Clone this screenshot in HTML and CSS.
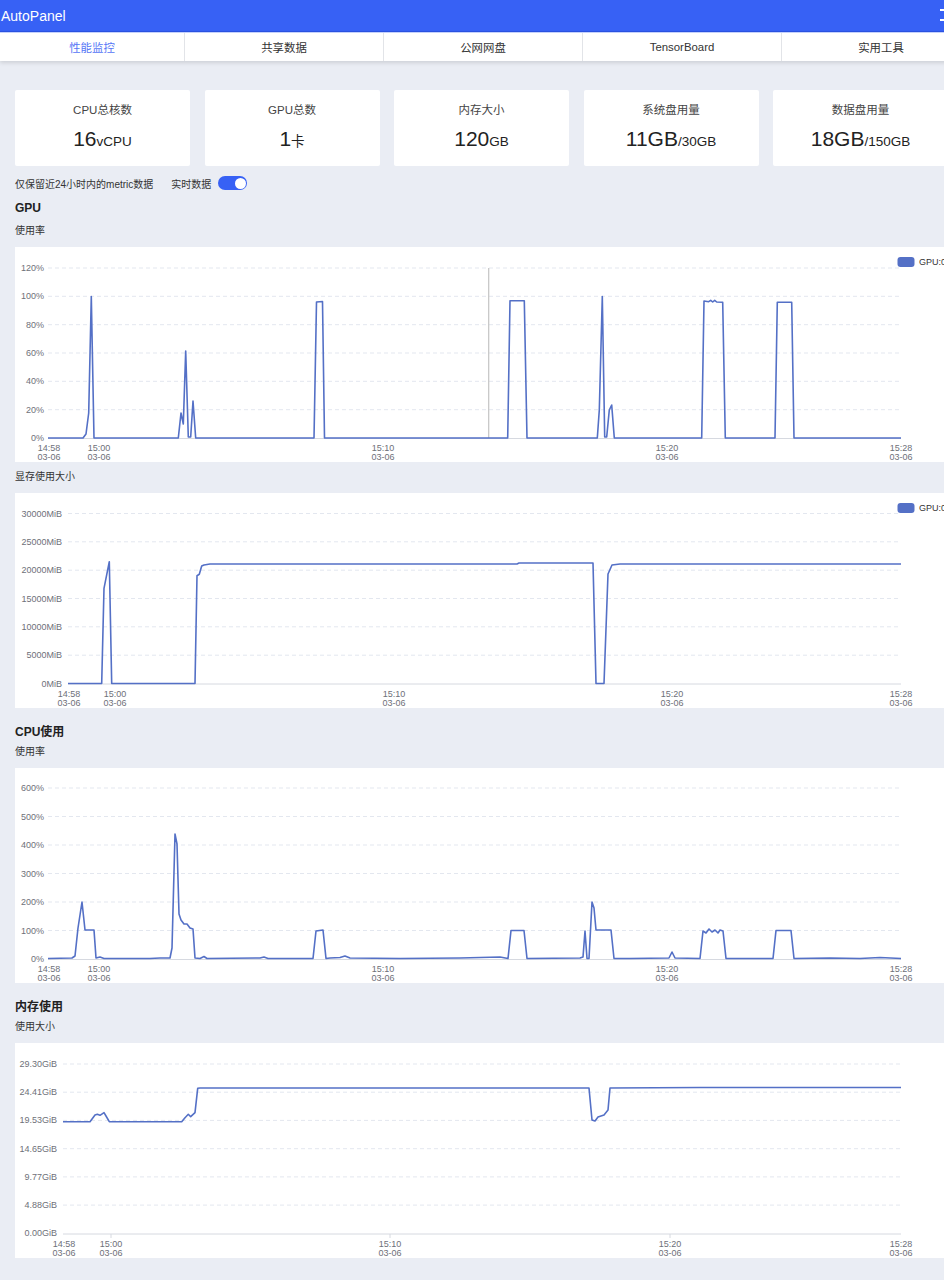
FILE: index.html
```html
<!DOCTYPE html>
<html lang="zh-CN">
<head>
    <meta charset="UTF-8">
    <meta name="viewport" content="width=device-width, initial-scale=1.0">
    <title>AutoPanel - 性能监控</title>
    <link rel="stylesheet" href="styles.css">
</head>
<body>
<div class="app">
    <!-- Top bar -->
    <header class="topbar">
        <span class="brand">AutoPanel</span>
        <span class="menu-icon"><i></i><i></i></span>
    </header>

    <nav class="tabs">
        <a class="tab active">性能监控</a>
        <a class="tab">共享数据</a>
        <a class="tab">公网网盘</a>
        <a class="tab">TensorBoard</a>
        <a class="tab">实用工具</a>
    </nav>

    <main class="content">
        <!-- Summary cards -->
        <div class="stats">
            <div class="stat-card">
                <div class="stat-title">CPU总核数</div>
                <div class="stat-value">16<span class="unit">vCPU</span></div>
            </div>
            <div class="stat-card">
                <div class="stat-title">GPU总数</div>
                <div class="stat-value">1<span class="unit">卡</span></div>
            </div>
            <div class="stat-card">
                <div class="stat-title">内存大小</div>
                <div class="stat-value">120<span class="unit">GB</span></div>
            </div>
            <div class="stat-card">
                <div class="stat-title">系统盘用量</div>
                <div class="stat-value">11GB<span class="unit">/30GB</span></div>
            </div>
            <div class="stat-card">
                <div class="stat-title">数据盘用量</div>
                <div class="stat-value">18GB<span class="unit">/150GB</span></div>
            </div>
        </div>

        <div class="toggle-row">
            <span>仅保留近24小时内的metric数据</span>
            <span class="toggle-label">实时数据</span>
            <span class="switch on"><span class="knob"></span></span>
        </div>

        <!-- GPU -->
        <h2 class="group-title first">GPU</h2>
        <div class="chart-label">使用率</div>
        <div class="chart-card">
            <svg class="chart" width="960" height="215" viewBox="0 0 960 215">
                <g class="grid">
                    <line x1="33" y1="21" x2="886" y2="21"/>
                    <line x1="33" y1="49.3" x2="886" y2="49.3"/>
                    <line x1="33" y1="77.7" x2="886" y2="77.7"/>
                    <line x1="33" y1="106" x2="886" y2="106"/>
                    <line x1="33" y1="134.3" x2="886" y2="134.3"/>
                    <line x1="33" y1="162.7" x2="886" y2="162.7"/>
                </g>
                <line class="axis" x1="33" y1="191.5" x2="886" y2="191.5"/>
                <g class="y-labels">
                    <text x="29" y="21">120%</text>
                    <text x="29" y="49.3">100%</text>
                    <text x="29" y="77.7">80%</text>
                    <text x="29" y="106">60%</text>
                    <text x="29" y="134.3">40%</text>
                    <text x="29" y="162.7">20%</text>
                    <text x="29" y="191">0%</text>
                </g>
                <g class="x-labels">
                    <text x="34" y="204">14:58<tspan x="34" y="213">03-06</tspan></text>
                    <text x="84" y="204">15:00<tspan x="84" y="213">03-06</tspan></text>
                    <text x="368" y="204">15:10<tspan x="368" y="213">03-06</tspan></text>
                    <text x="652" y="204">15:20<tspan x="652" y="213">03-06</tspan></text>
                    <text x="886" y="204">15:28<tspan x="886" y="213">03-06</tspan></text>
                </g>
                <line class="pointer" x1="473.7" y1="21" x2="473.7" y2="191"/>
                <polyline class="series" points="33,191 68,191 71,187 73.7,166 76.3,49.5 79,191 163.3,191 166,166 168.3,177 170.7,104 173.3,190 175.7,190 178,154 180.7,191 299,191 301.5,55 307.5,54.5 309.5,191 492.7,191 495,53.7 509.3,53.7 512,191 582.3,191 584.3,163 587.3,49.5 589.7,190 591.7,190 594.3,163 596.7,158 599.3,191 686.7,191 689,54 693.7,54.7 695.7,53.3 697.7,55 699.7,53.3 701.7,55 707.7,55.3 710.3,191 760,191 762.3,55.3 776.7,55.3 779,191 886,191"/>
                <rect class="legend-mark" x="882.5" y="10" width="17" height="10" rx="3"/>
                <text class="legend-text" x="904" y="15">GPU:0</text>
            </svg>
        </div>

        <div class="chart-label spaced">显存使用大小</div>
        <div class="chart-card">
            <svg class="chart" width="960" height="215" viewBox="0 0 960 215">
                <g class="grid">
                    <line x1="53" y1="20.5" x2="886" y2="20.5"/>
                    <line x1="53" y1="48.8" x2="886" y2="48.8"/>
                    <line x1="53" y1="77.2" x2="886" y2="77.2"/>
                    <line x1="53" y1="105.5" x2="886" y2="105.5"/>
                    <line x1="53" y1="133.8" x2="886" y2="133.8"/>
                    <line x1="53" y1="162.2" x2="886" y2="162.2"/>
                </g>
                <line class="axis" x1="53" y1="191" x2="886" y2="191"/>
                <g class="y-labels">
                    <text x="47" y="20.5">30000MiB</text>
                    <text x="47" y="48.8">25000MiB</text>
                    <text x="47" y="77.2">20000MiB</text>
                    <text x="47" y="105.5">15000MiB</text>
                    <text x="47" y="133.8">10000MiB</text>
                    <text x="47" y="162.2">5000MiB</text>
                    <text x="47" y="190.5">0MiB</text>
                </g>
                <g class="x-labels">
                    <text x="54" y="203.5">14:58<tspan x="54" y="212.5">03-06</tspan></text>
                    <text x="100" y="203.5">15:00<tspan x="100" y="212.5">03-06</tspan></text>
                    <text x="379" y="203.5">15:10<tspan x="379" y="212.5">03-06</tspan></text>
                    <text x="657" y="203.5">15:20<tspan x="657" y="212.5">03-06</tspan></text>
                    <text x="886" y="203.5">15:28<tspan x="886" y="212.5">03-06</tspan></text>
                </g>
                <polyline class="series" points="53,190.5 86.7,190.5 89,95.3 94.3,68.7 96.7,190.5 180,190.5 182,82.7 184.3,81.3 186.7,73 189,72 195,71 502,71 504,70 578,70 581,190.5 589,190.5 593,81 597,72 605,71 886,71"/>
                <rect class="legend-mark" x="882.5" y="10" width="17" height="10" rx="3"/>
                <text class="legend-text" x="904" y="15">GPU:0</text>
            </svg>
        </div>

        <!-- CPU -->
        <h2 class="group-title">CPU使用</h2>
        <div class="chart-label">使用率</div>
        <div class="chart-card">
            <svg class="chart" width="960" height="215" viewBox="0 0 960 215">
                <g class="grid">
                    <line x1="33" y1="20" x2="886" y2="20"/>
                    <line x1="33" y1="48.5" x2="886" y2="48.5"/>
                    <line x1="33" y1="77" x2="886" y2="77"/>
                    <line x1="33" y1="105.5" x2="886" y2="105.5"/>
                    <line x1="33" y1="134" x2="886" y2="134"/>
                    <line x1="33" y1="162.5" x2="886" y2="162.5"/>
                </g>
                <line class="axis" x1="33" y1="191.5" x2="886" y2="191.5"/>
                <g class="y-labels">
                    <text x="29" y="20">600%</text>
                    <text x="29" y="48.5">500%</text>
                    <text x="29" y="77">400%</text>
                    <text x="29" y="105.5">300%</text>
                    <text x="29" y="134">200%</text>
                    <text x="29" y="162.5">100%</text>
                    <text x="29" y="191">0%</text>
                </g>
                <g class="x-labels">
                    <text x="34" y="204">14:58<tspan x="34" y="213">03-06</tspan></text>
                    <text x="84" y="204">15:00<tspan x="84" y="213">03-06</tspan></text>
                    <text x="368" y="204">15:10<tspan x="368" y="213">03-06</tspan></text>
                    <text x="652" y="204">15:20<tspan x="652" y="213">03-06</tspan></text>
                    <text x="886" y="204">15:28<tspan x="886" y="213">03-06</tspan></text>
                </g>
                <polyline class="series" points="33,190.5 57,190 60,188 63,160 67,134 70,162 79,162 81,190 85,189 89,190.5 135,190.5 145,190 155,190 157,180 160,66 162,76 164,146 166,152 169,156 172,156 175,160 178,161 180,190 185,190.5 189,188.5 192,190.5 245,190 249,189 253,190.5 298,190.5 301,163 308,162 311,190.5 315,190 325,189.5 330,188 335,190 385,190.5 445,190 485,189 493,190.5 496,162.5 509,162.5 512,190.5 565,190 568,189 570,163 572,190.5 574,190.5 577,134 579,140 581,162 596,162 599,190.5 615,190.5 654,190 657,184 660,190 685,190.5 688,163 691,165 694,161 697,164 700,162 703,165 705,162 708,163 711,190.5 758,190.5 761,162.5 776,162.5 779,190.5 815,190 845,190.5 865,189.5 886,190.5"/>
            </svg>
        </div>

        <!-- Memory -->
        <h2 class="group-title">内存使用</h2>
        <div class="chart-label">使用大小</div>
        <div class="chart-card last">
            <svg class="chart" width="960" height="215" viewBox="0 0 960 215">
                <g class="grid">
                    <line x1="48" y1="21" x2="886" y2="21"/>
                    <line x1="48" y1="49.2" x2="886" y2="49.2"/>
                    <line x1="48" y1="77.4" x2="886" y2="77.4"/>
                    <line x1="48" y1="105.7" x2="886" y2="105.7"/>
                    <line x1="48" y1="133.9" x2="886" y2="133.9"/>
                    <line x1="48" y1="162.1" x2="886" y2="162.1"/>
                </g>
                <line class="axis" x1="48" y1="191" x2="886" y2="191"/>
                <g class="ticks">
                    <line x1="96" y1="191" x2="96" y2="195"/>
                    <line x1="375" y1="191" x2="375" y2="195"/>
                    <line x1="655" y1="191" x2="655" y2="195"/>
                </g>
                <g class="y-labels">
                    <text x="42" y="21">29.30GiB</text>
                    <text x="42" y="49.2">24.41GiB</text>
                    <text x="42" y="77.4">19.53GiB</text>
                    <text x="42" y="105.7">14.65GiB</text>
                    <text x="42" y="133.9">9.77GiB</text>
                    <text x="42" y="162.1">4.88GiB</text>
                    <text x="42" y="190.3">0.00GiB</text>
                </g>
                <g class="x-labels">
                    <text x="49" y="203.5">14:58<tspan x="49" y="212.5">03-06</tspan></text>
                    <text x="96" y="203.5">15:00<tspan x="96" y="212.5">03-06</tspan></text>
                    <text x="375" y="203.5">15:10<tspan x="375" y="212.5">03-06</tspan></text>
                    <text x="655" y="203.5">15:20<tspan x="655" y="212.5">03-06</tspan></text>
                    <text x="886" y="203.5">15:28<tspan x="886" y="212.5">03-06</tspan></text>
                </g>
                <polyline class="series" points="48,78.7 75,78.7 80,72 82.3,71.3 85,72.3 89,69.7 91,73 94.3,78.7 166.7,78.7 170,74.7 173.3,71.3 175.7,73.7 180,69.7 182.7,45.3 185,45 574,45 577,77 580,78 583,74 589,72 593,67 595,45 685,44.5 886,44.5"/>
            </svg>
        </div>
    </main>
</div>
</body>
</html>
```

FILE: styles.css
```css
/* General */
html, body {
    margin: 0;
    padding: 0;
    overflow-x: hidden;
}

body {
    font-family: "Liberation Sans", "Noto Sans CJK SC", sans-serif;
    background-color: #eaedf4;
    color: #333333;
}

.app {
    width: 990px;
    min-height: 1280px;
}

/* Top bar */
.topbar {
    height: 31px;
    background: #3761f5;
    border-bottom: 1px solid #2b52e3;
    display: flex;
    align-items: center;
    justify-content: space-between;
    color: #ffffff;
}

.brand {
    font-size: 14px;
    padding-left: 1px;
}

.menu-icon {
    width: 16px;
    height: 12px;
    margin-right: 34px;
    display: flex;
    flex-direction: column;
    justify-content: space-between;
    margin-top: -1px;
}

.menu-icon i {
    display: block;
    height: 2px;
    background: #ffffff;
}

/* Tabs */
.tabs {
    display: grid;
    grid-template-columns: 185px repeat(4, 199px);
    height: 28px;
    background: #ffffff;
    border-top: 1px solid #c5d1fb;
    box-shadow: 0 2px 4px rgba(0, 0, 0, 0.12);
    position: relative;
}

.tab {
    display: flex;
    align-items: center;
    justify-content: center;
    font-size: 11.4px;
    color: #333333;
    border-right: 1px solid #e2e4e8;
}

.tab.active {
    color: #5676f6;
}

/* Content */
.content {
    padding: 29px 15px 0;
}

.stats {
    display: grid;
    grid-template-columns: repeat(5, 175px);
    gap: 14.5px;
}

.stat-card {
    height: 76px;
    background: #ffffff;
    border-radius: 2px;
    display: flex;
    flex-direction: column;
    align-items: center;
}

.stat-title {
    margin-top: 13px;
    font-size: 11.5px;
    line-height: 15px;
    color: #444444;
}

.stat-value {
    margin-top: 9px;
    font-size: 21px;
    line-height: 24px;
    color: #222222;
}

.stat-value .unit {
    font-size: 13.5px;
}

/* Realtime switch */
.toggle-row {
    margin-top: 10px;
    height: 14px;
    display: flex;
    align-items: center;
    font-size: 10px;
    color: #333333;
}

.toggle-label {
    margin-left: 18px;
    margin-right: 7px;
}

.switch {
    width: 29px;
    height: 14px;
    border-radius: 7px;
    background: #3761f5;
    display: flex;
    align-items: center;
    justify-content: flex-end;
    padding: 0 1.5px;
    box-sizing: border-box;
}

.switch .knob {
    width: 11px;
    height: 11px;
    border-radius: 50%;
    background: #ffffff;
}

/* Chart sections */
.group-title {
    margin: 17px 0 0;
    font-size: 12px;
    line-height: 14px;
    font-weight: bold;
    color: #222222;
}

.group-title.first {
    margin-top: 11px;
}

.chart-label {
    margin: 6px 0 9px;
    font-size: 10px;
    line-height: 14px;
    color: #333333;
}

.group-title.first + .chart-label {
    margin-top: 9px;
}

.chart-label.spaced {
    margin-top: 8px;
}

.chart-card {
    height: 215px;
    background: #ffffff;
    overflow: hidden;
}

.chart {
    display: block;
    font-family: "Liberation Sans", sans-serif;
}

.chart .grid line {
    stroke: #e3e7ef;
    stroke-width: 1;
    stroke-dasharray: 4 3;
}

.chart .axis,
.chart .ticks line {
    stroke: #d6d9e0;
    stroke-width: 1;
}

.chart .pointer {
    stroke: #c4c4c4;
    stroke-width: 1.2;
}

.chart .y-labels text {
    font-size: 9px;
    fill: #6e7079;
    text-anchor: end;
    dominant-baseline: central;
}

.chart .x-labels text {
    font-size: 9px;
    fill: #6e7079;
    text-anchor: middle;
}

.chart .series {
    fill: none;
    stroke: #5470c6;
    stroke-width: 1.6;
    stroke-linejoin: round;
}

.chart .legend-mark {
    fill: #5470c6;
}

.chart .legend-text {
    font-size: 9px;
    fill: #333333;
    dominant-baseline: central;
}
```
